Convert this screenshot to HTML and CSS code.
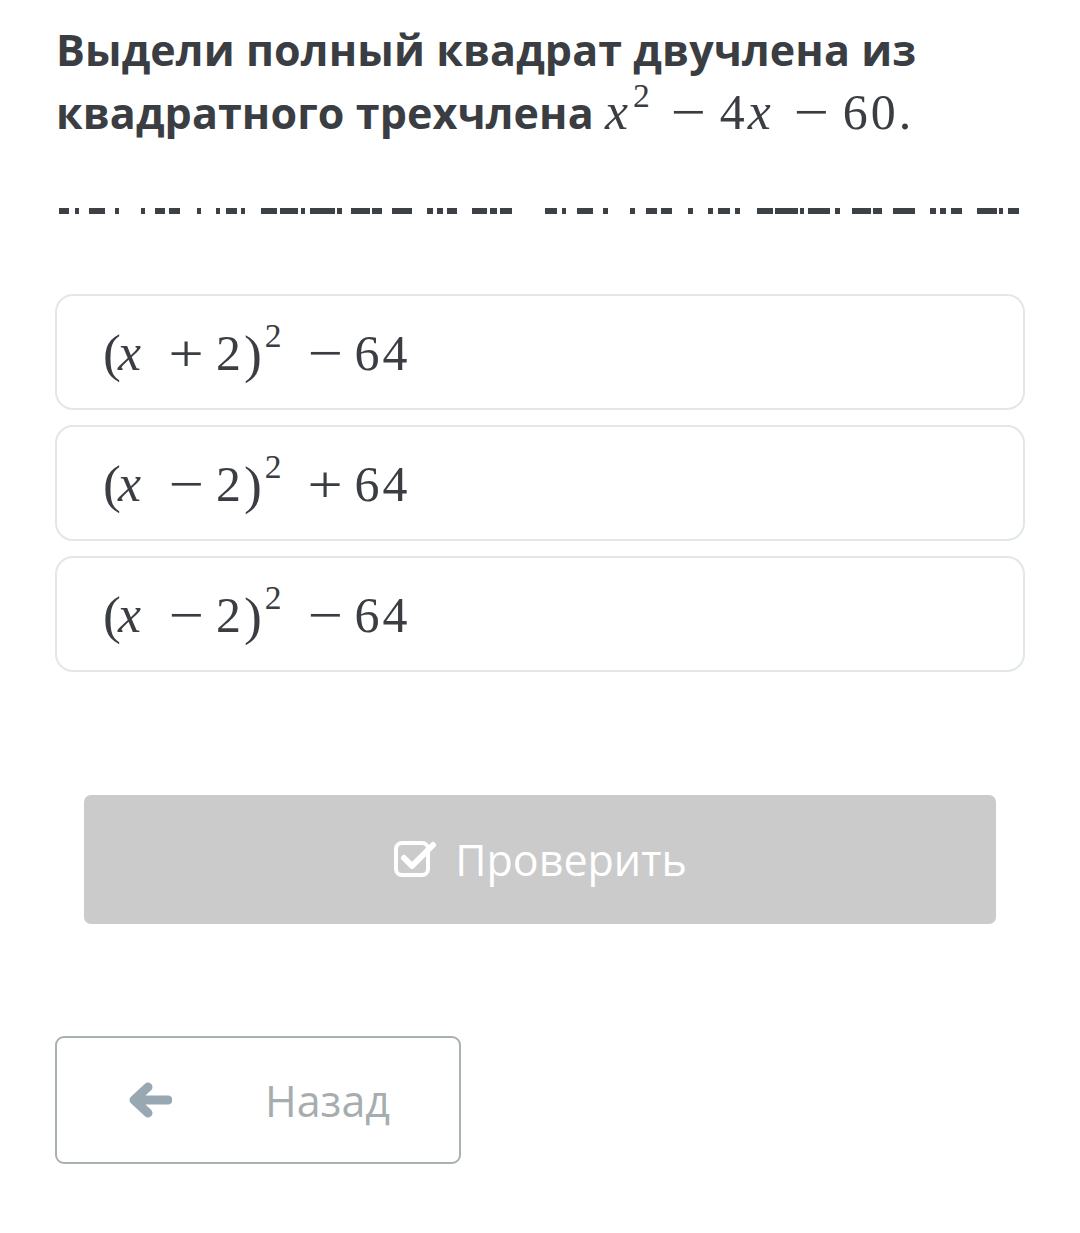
FILE: index.html
```html
<!DOCTYPE html>
<html lang="ru">
<head>
<meta charset="utf-8">
<title>Квадратный трехчлен</title>
<link rel="stylesheet" href="styles.css">
</head>
<body>
<main class="page">
  <h1 class="title">Выдели полный квадрат двучлена из квадратного трехчлена <span class="math"><i>x</i><sup>2</sup><span class="op">−</span><span class="num">4</span><i>x</i><span class="op">−</span><span class="num">60.</span></span></h1>

  <svg class="dashes" width="1080" height="14" viewBox="0 0 1080 14" aria-hidden="true">
    <g fill="#3d4045">
      <rect x="59" y="3" width="10" height="6"/><rect x="75" y="3" width="4" height="6"/><rect x="89" y="3" width="16" height="6"/><rect x="115" y="3" width="4" height="6"/>
      <rect x="141" y="3" width="4" height="6"/><rect x="155" y="3" width="10" height="6"/><rect x="169" y="3" width="11" height="6"/><rect x="197" y="3" width="4" height="6"/>
      <rect x="216" y="3" width="4" height="6"/><rect x="226" y="3" width="11" height="6"/><rect x="241" y="3" width="4" height="6"/><rect x="261" y="3" width="16" height="6"/>
      <rect x="280" y="3" width="18" height="6"/><rect x="301" y="3" width="4" height="6"/><rect x="310" y="3" width="25" height="6"/><rect x="337" y="3" width="5" height="6"/>
      <rect x="351" y="3" width="19" height="6"/><rect x="372" y="3" width="10" height="6"/><rect x="392" y="3" width="20" height="6"/><rect x="427" y="3" width="6" height="6"/>
      <rect x="437" y="3" width="6" height="6"/><rect x="447" y="3" width="10" height="6"/><rect x="472" y="3" width="15" height="6"/><rect x="490" y="3" width="7" height="6"/>
      <rect x="500" y="3" width="12" height="6"/>
      <rect x="545" y="3" width="12" height="6"/><rect x="562" y="3" width="4" height="6"/><rect x="577" y="3" width="16" height="6"/><rect x="603" y="3" width="5" height="6"/>
      <rect x="630" y="3" width="5" height="6"/><rect x="646" y="3" width="11" height="6"/><rect x="661" y="3" width="11" height="6"/><rect x="688" y="3" width="5" height="6"/>
      <rect x="708" y="3" width="5" height="6"/><rect x="718" y="3" width="12" height="6"/><rect x="735" y="3" width="5" height="6"/><rect x="757" y="3" width="16" height="6"/>
      <rect x="775" y="3" width="23" height="6"/><rect x="800" y="3" width="4" height="6"/><rect x="808" y="3" width="22" height="6"/><rect x="835" y="3" width="5" height="6"/>
      <rect x="852" y="3" width="19" height="6"/><rect x="873" y="3" width="9" height="6"/><rect x="893" y="3" width="22" height="6"/><rect x="930" y="3" width="6" height="6"/>
      <rect x="940" y="3" width="6" height="6"/><rect x="951" y="3" width="11" height="6"/><rect x="977" y="3" width="20" height="6"/><rect x="999" y="3" width="4" height="6"/>
      <rect x="1008" y="3" width="11" height="6"/>
    </g>
  </svg>

  <div class="options">
    <div class="option"><span class="math"><span class="paren">(</span><i>x</i><span class="op">+</span><span class="num">2</span><span class="paren">)</span><sup>2</sup><span class="op">−</span><span class="num">64</span></span></div>
    <div class="option"><span class="math"><span class="paren">(</span><i>x</i><span class="op">−</span><span class="num">2</span><span class="paren">)</span><sup>2</sup><span class="op">+</span><span class="num">64</span></span></div>
    <div class="option"><span class="math"><span class="paren">(</span><i>x</i><span class="op">−</span><span class="num">2</span><span class="paren">)</span><sup>2</sup><span class="op">−</span><span class="num">64</span></span></div>
  </div>

  <button class="check" type="button">
    <svg class="check-icon" width="44" height="40" viewBox="0 0 44 40" aria-hidden="true">
      <rect x="3" y="5" width="32" height="32" rx="6" fill="none" stroke="#ffffff" stroke-width="4"/>
      <path d="M11 20 L19 28 L40 7" fill="none" stroke="#ffffff" stroke-width="6" stroke-linecap="round" stroke-linejoin="round"/>
    </svg>
    <span>Проверить</span>
  </button>

  <button class="back" type="button">
    <svg class="back-icon" width="44" height="36" viewBox="0 0 44 36" aria-hidden="true">
      <path d="M40 18 H8 M20 5 L6 18 L20 31" fill="none" stroke="#97a8b3" stroke-width="9" stroke-linecap="round" stroke-linejoin="round"/>
    </svg>
    <span>Назад</span>
  </button>
</main>
</body>
</html>
```

FILE: styles.css
```css
html, body {
  margin: 0;
  padding: 0;
  background: #ffffff;
}

.page {
  width: 1080px;
  padding: 19px 55px 0 55px;
  box-sizing: border-box;
  font-family: "Open Sans", "Noto Sans", sans-serif;
}

.title {
  margin: 0;
  padding-left: 1px;
  font-size: 43px;
  font-weight: 700;
  line-height: 62px;
  color: #3a3d42;
  letter-spacing: 0.1px;
}

.math {
  font-family: "Liberation Serif", "DejaVu Serif", serif;
  font-weight: 400;
  font-size: 48px;
  color: #3a3d42;
  white-space: nowrap;
  letter-spacing: 0;
}

.math i {
  font-style: italic;
  font-size: 1.08em;
  padding: 0 2px 0 0;
}

.math .num {
  font-size: 1.04em;
  letter-spacing: 3px;
}

.math .paren {
  font-size: 1.12em;
  line-height: 0;
  vertical-align: -0.03em;
}

.math .paren:first-child {
  margin-right: -3px;
}

.math sup {
  font-size: 0.7em;
  vertical-align: 0.66em;
  line-height: 0;
  margin-left: 3px;
}

.math .op {
  display: inline-block;
  width: 60px;
  margin-left: 13px;
  text-align: center;
  font-size: 1.12em;
  line-height: 1;
  vertical-align: -0.02em;
  transform: scaleX(1.16);
}

.title .math .op {
  width: 64px;
  margin-left: 6px;
}

.dashes {
  display: block;
  margin: 61px 0 0 -55px;
}

.options {
  display: flex;
  flex-direction: column;
  gap: 15px;
  margin-top: 75px;
}

.option {
  height: 116px;
  box-sizing: border-box;
  border: 2px solid #e2e7e7;
  border-radius: 18px;
  display: flex;
  align-items: center;
  padding-left: 46px;
}

.check {
  display: flex;
  align-items: center;
  justify-content: center;
  gap: 18px;
  width: 912px;
  height: 129px;
  margin: 123px 0 0 29px;
  border: none;
  border-radius: 7px;
  background: #cbcbcb;
  color: #ffffff;
  font-family: "Open Sans", "Noto Sans", sans-serif;
  font-size: 43px;
  font-weight: 400;
  padding: 0;
}

.check-icon {
  display: block;
  margin-top: -4px;
}

.back {
  display: flex;
  align-items: center;
  width: 406px;
  height: 128px;
  margin-top: 112px;
  box-sizing: border-box;
  border: 2px solid #a9b0b1;
  border-radius: 9px;
  background: #ffffff;
  color: #a6adb0;
  font-family: "Open Sans", "Noto Sans", sans-serif;
  font-size: 43px;
  font-weight: 400;
  padding: 0 0 0 71px;
}

.back-icon {
  display: block;
  margin-right: 93px;
}
```
